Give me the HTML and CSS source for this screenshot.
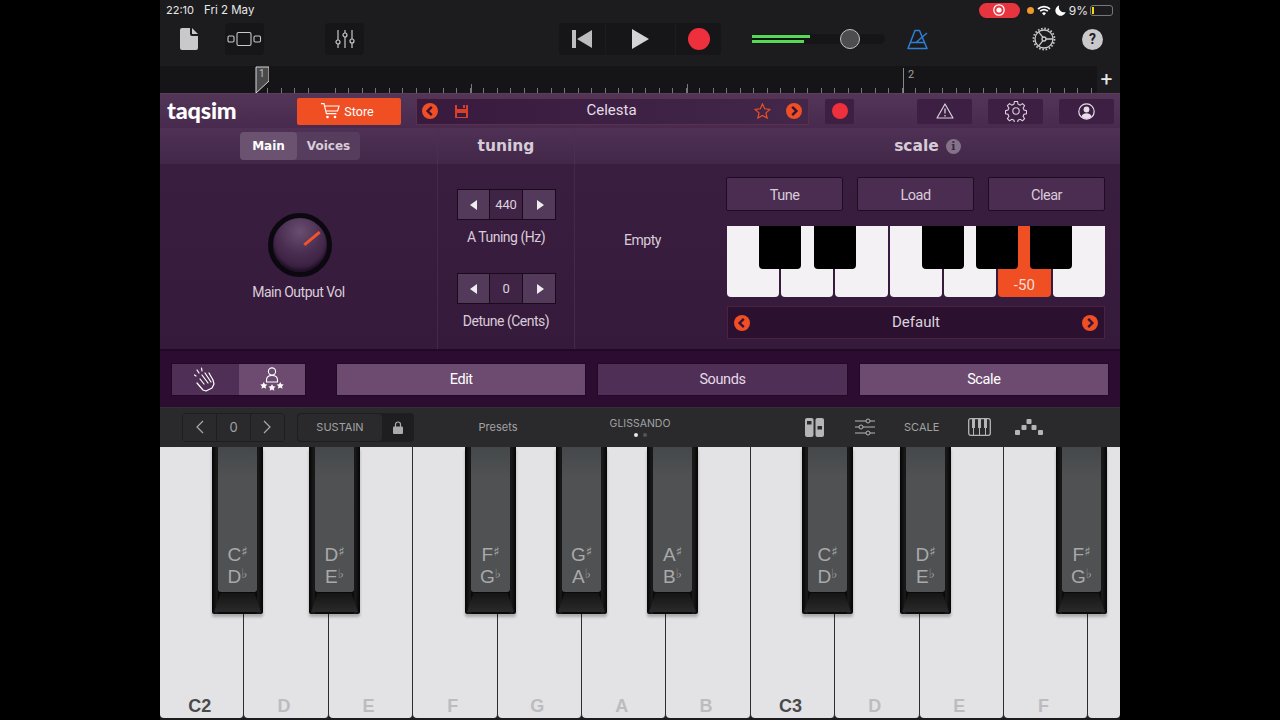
FILE: index.html
```html
<!DOCTYPE html>
<html lang="en">
<head>
<meta charset="utf-8">
<title>GarageBand taqsim</title>
<link rel="stylesheet" href="styles.css">
</head>
<body>
<div class="stage">
  <div class="status">
    <span class="time">22:10</span><span class="date">Fri 2 May</span>
    <span class="spacer"></span>
    <span class="rec-pill"><svg width="14" height="14" viewBox="0 0 14 14"><circle cx="7" cy="7" r="5.2" fill="none" stroke="#fff" stroke-width="1.3"/><circle cx="7" cy="7" r="2.6" fill="#fff"/></svg></span>
    <span class="dot-orange"></span>
    <svg class="st-wifi" width="14" height="11" viewBox="0 0 14 11"><path d="M1 4a9 9 0 0 1 12 0M3.2 6.2a6 6 0 0 1 7.6 0" fill="none" stroke="#fff" stroke-width="1.7"/><path d="M5 8.2a3 3 0 0 1 4 0L7 10.4z" fill="#fff"/></svg>
    <svg class="st-moon" width="11" height="11" viewBox="0 0 11 11"><path d="M4.2 .6A5.2 5.2 0 1 0 10.6 7 5 5 0 0 1 4.2.6z" fill="#fff"/></svg>
    <span class="pct">9%</span>
    <span class="battery"><span class="battery-fill"></span></span>
  </div>

  <div class="toolbar">
    <svg class="ic-doc" width="20" height="24" viewBox="0 0 20 24"><path d="M3 1h8v6a2 2 0 0 0 2 2h6v12a2 2 0 0 1-2 2H3a2 2 0 0 1-2-2V3a2 2 0 0 1 2-2zM13 1l6 6h-6z" fill="#c9c9cb"/></svg>
    <div class="tool-box box-views">
      <svg width="36" height="16" viewBox="0 0 36 16"><g fill="none" stroke="#c9c9cb" stroke-width="1.1"><rect x="1" y="5" width="6" height="6" rx="1.2"/><rect x="10" y="1.5" width="14" height="13" rx="1.5"/><rect x="27" y="5" width="6.5" height="6" rx="1.2"/></g></svg>
    </div>
    <div class="tool-box box-mixer">
      <svg width="20" height="20" viewBox="0 0 20 20"><g fill="none" stroke="#c9c9cb" stroke-width="1.2"><path d="M3 1v10M3 15v4M10 1v3M10 8v11M17 1v9M17 14v5"/><circle cx="3" cy="13" r="2"/><circle cx="10" cy="6" r="2"/><circle cx="17" cy="12" r="2"/></g></svg>
    </div>
    <div class="transport">
      <div class="tp-cell tp-prev"><svg width="22" height="18" viewBox="0 0 22 18"><path d="M1 0h4v18H1zM21 0v18L6 9z" fill="#bdbdbf"/></svg></div>
      <div class="tp-cell tp-play"><svg width="19" height="20" viewBox="0 0 19 20"><path d="M1 0l17 10L1 20z" fill="#d4d4d6"/></svg></div>
      <div class="tp-cell tp-rec"><span class="rec-big"></span></div>
    </div>
    <div class="level">
      <span class="meter-a"></span><span class="meter-b"></span>
      <span class="level-knob"></span>
    </div>
    <svg class="ic-metro" width="22" height="21" viewBox="0 0 22 21"><g fill="none" stroke="#2f7fd6" stroke-width="1.5" stroke-linejoin="round"><path d="M8 1.500h4.500L20 19.500H1z"/><path d="M4 13.500h13M9 13.500 20 4"/></g></svg>
    <svg class="ic-gear" width="24" height="24" viewBox="0 0 24 24"><g fill="none" stroke="#c9c9cb" stroke-width="1.300"><circle cx="12" cy="12" r="9"/><circle cx="12" cy="12" r="2"/><path d="M14 12h7M11 10.300 6.500 4.800M11 13.700l-4.500 5.500"/><circle cx="12" cy="12" r="10.500" stroke-dasharray="1.600 1.700" stroke-width="1.800"/></g></svg>
    <span class="ic-help">?</span>
  </div>

  <div class="ruler-row">
    <div class="ruler">
      <span class="tall tall-a"></span><span class="tall tall-b"></span><span class="bar-two"></span>
      <span class="bar-label">2</span>
      <svg class="playhead" width="14" height="27" viewBox="0 0 14 27"><path d="M1 1h13v14L1 27z" fill="#4a4a4c" stroke="#d8d8d8" stroke-width="1"/></svg>
      <span class="play-label">1</span>
    </div>
    <span class="plus">+</span>
  </div>

  <div class="plug-head">
    <div class="logo">taqs<span class="logo-i">i</span>m</div>
    <div class="store">
      <svg width="19" height="16" viewBox="0 0 19 16"><g fill="none" stroke="#fff" stroke-width="1.100"><path d="M0 .6h3l2.400 10h10M3.600 3h14.500l-1.500 5H5"/></g><circle cx="6.500" cy="14" r="1.300" fill="#fff"/><circle cx="14" cy="14" r="1.300" fill="#fff"/></svg>
      <span>Store</span>
    </div>
    <div class="preset">
      <span class="round-ar"><svg width="16" height="16" viewBox="0 0 16 16"><circle cx="8" cy="8" r="8" fill="#f04e23"/><path d="M9.800 3.800 5.600 8l4.200 4.200" fill="none" stroke="#35123a" stroke-width="2.400"/></svg></span>
      <svg class="ic-save" width="15" height="15" viewBox="0 0 15 15"><path d="M1 1h2v4h9V1h2v13H1zM9 1h2v3H9zM3 9h9v4H3z" fill="#d8402a" fill-rule="evenodd"/></svg>
      <span class="preset-name">Celesta</span>
      <svg class="ic-star" width="17" height="16" viewBox="0 0 17 16"><path d="M8.500 1l2.200 4.800 5.200.6-3.900 3.500 1.100 5.100-4.600-2.600L3.900 15l1.100-5.100L1.100 6.400l5.200-.6z" fill="none" stroke="#f04e23" stroke-width="1.200"/></svg>
      <span class="round-ar"><svg width="16" height="16" viewBox="0 0 16 16"><circle cx="8" cy="8" r="8" fill="#f04e23"/><path d="M6.200 3.800 10.400 8l-4.200 4.200" fill="none" stroke="#35123a" stroke-width="2.400"/></svg></span>
    </div>
    <div class="head-btn head-rec"><span class="rec-small"></span></div>
    <div class="head-btn hb-warn"><svg width="18" height="16" viewBox="0 0 18 16"><path d="M9 1l8 14H1z" fill="none" stroke="#ddd0dd" stroke-width="1.200" stroke-linejoin="round"/><path d="M9 5.500v5M9 12v1.500" stroke="#ddd0dd" stroke-width="1.300"/></svg></div>
    <div class="head-btn hb-gear"><svg width="22" height="22" viewBox="0 0 22 22"><g fill="none" stroke="#ddd0dd" stroke-width="1.100"><path d="M9.500 1.500h3l.6 2.700 2 .9 2.400-1.500 2.100 2.100-1.500 2.400.9 2 2.500.6v3l-2.500.6-.9 2 1.500 2.400-2.100 2.100-2.400-1.500-2 .9-.6 2.500h-3l-.6-2.500-2-.9-2.400 1.500-2.100-2.100 1.500-2.400-.9-2-2.500-.6v-3l2.500-.6.900-2-1.500-2.400 2.100-2.100 2.400 1.500 2-.9z"/><circle cx="11" cy="11" r="3.200"/></g></svg></div>
    <div class="head-btn hb-user"><svg width="17" height="17" viewBox="0 0 17 17"><circle cx="8.500" cy="8.500" r="7.700" fill="none" stroke="#e8dce8" stroke-width="1.200"/><circle cx="8.500" cy="6.500" r="2.900" fill="#e8dce8"/><path d="M3.300 13.600c1-2.600 3-3.400 5.200-3.400s4.200.8 5.200 3.400a7 7 0 0 1-10.400 0z" fill="#e8dce8"/></svg></div>
  </div>

  <div class="sec-heads">
    <div class="sec sec-a">
      <div class="tabs"><span class="tab tab-on">Main</span><span class="tab">Voices</span></div>
    </div>
    <div class="sec sec-b"><span class="sec-title">tuning</span></div>
    <div class="sec sec-c"><span class="sec-title">scale</span><span class="info">i</span></div>
  </div>

  <div class="panels">
    <div class="col col-a">
      <div class="knob"><span class="knob-needle"></span></div>
      <div class="lbl knob-lbl">Main Output Vol</div>
    </div>
    <div class="col col-b">
      <div class="stepper"><span class="st-cell"><i class="tri-l"></i></span><span class="st-cell st-val">440</span><span class="st-cell"><i class="tri-r"></i></span></div>
      <div class="lbl st-lbl">A Tuning (Hz)</div>
      <div class="stepper st-second"><span class="st-cell"><i class="tri-l"></i></span><span class="st-cell st-val">0</span><span class="st-cell"><i class="tri-r"></i></span></div>
      <div class="lbl st-lbl">Detune (Cents)</div>
    </div>
    <div class="col col-c">
      <div class="empty lbl">Empty</div>
      <div class="scale-panel">
        <div class="scale-btns">
          <span class="scale-btn">Tune</span><span class="scale-btn">Load</span><span class="scale-btn">Clear</span>
        </div>
        <div class="mini">
          <span class="mw"></span><span class="mw"></span><span class="mw"></span><span class="mw"></span><span class="mw"></span><span class="mw mw-on">-50</span><span class="mw"></span>
          <span class="mb mb1"></span><span class="mb mb2"></span><span class="mb mb3"></span><span class="mb mb4"></span><span class="mb mb5"></span><span class="mo"></span>
        </div>
        <div class="scale-name">
          <svg width="16" height="16" viewBox="0 0 16 16"><circle cx="8" cy="8" r="8" fill="#f04e23"/><path d="M9.800 3.800 5.600 8l4.200 4.200" fill="none" stroke="#35123a" stroke-width="2.400"/></svg>
          <span class="scale-title">Default</span>
          <svg width="16" height="16" viewBox="0 0 16 16"><circle cx="8" cy="8" r="8" fill="#f04e23"/><path d="M6.200 3.800 10.400 8l-4.200 4.200" fill="none" stroke="#35123a" stroke-width="2.400"/></svg>
        </div>
      </div>
    </div>
  </div>

  <div class="modes">
    <div class="toggle">
      <span class="tg tg-off"><svg width="22" height="25" viewBox="0 0 22 25"><g fill="none" stroke="#fff" stroke-width="1.200" stroke-linecap="round" stroke-linejoin="round"><path d="M6 12l4 5M8 8l6 8M11 6l6 9M15 6l4 7 1 4-2 4-6 3-3-1-6-7"/><path d="M5 6 3 3M8 4 7.500 1M2 9 .5 8"/></g></svg></span>
      <span class="tg tg-on"><svg width="24" height="25" viewBox="0 0 24 25"><g fill="none" stroke="#fff" stroke-width="1.100"><circle cx="12" cy="4.500" r="3.600"/><path d="M6.500 15v-2c0-3 2.500-4.500 5.500-4.500s5.500 1.500 5.500 4.500v2z"/></g><path d="M3.800 15l1.100 2.300 2.500.3-1.800 1.700.5 2.500-2.300-1.200-2.300 1.200.5-2.500L.2 17.600l2.500-.3zM12 17l1.100 2.300 2.500.3-1.800 1.700.5 2.500L12 22.600l-2.300 1.200.5-2.500-1.800-1.700 2.500-.3zM20.200 15l1.100 2.300 2.500.3-1.800 1.700.5 2.500-2.300-1.200-2.300 1.200.5-2.500-1.800-1.700 2.500-.3z" fill="#fff"/></svg></span>
    </div>
    <span class="mode-btn mode-on">Edit</span>
    <span class="mode-btn">Sounds</span>
    <span class="mode-btn mode-on">Scale</span>
  </div>

  <div class="kbar">
    <div class="oct">
      <span class="oct-cell"><svg width="9" height="14" viewBox="0 0 9 14"><path d="M8 1 2 7l6 6" fill="none" stroke="#aaa" stroke-width="1.200"/></svg></span>
      <span class="oct-cell oct-val">0</span>
      <span class="oct-cell"><svg width="9" height="14" viewBox="0 0 9 14"><path d="M1 1l6 6-6 6" fill="none" stroke="#aaa" stroke-width="1.200"/></svg></span>
    </div>
    <div class="sustain">
      <span class="sustain-label">SUSTAIN</span>
      <span class="sustain-lock"><svg width="10" height="13" viewBox="0 0 10 13"><path d="M2.500 6V3.500a2.500 2.500 0 0 1 5 0V6" fill="none" stroke="#aaa" stroke-width="1.200"/><rect y="5.500" width="10" height="7.500" rx="1" fill="#aaa"/></svg></span>
    </div>
    <span class="presets">Presets</span>
    <div class="gliss">
      <span>GLISSANDO</span>
      <span class="pager"><i class="pg-on"></i><i class="pg-off"></i></span>
    </div>
    <svg class="kb-i1" width="19" height="19" viewBox="0 0 19 19"><rect width="8.500" height="19" rx="2" fill="#b5b5b7"/><rect x="10.500" width="8.500" height="19" rx="2" fill="#b5b5b7"/><rect x="2" y="3" width="4.500" height="3.500" fill="#2a2a2c"/><rect x="12.500" y="8" width="4.500" height="3.500" fill="#2a2a2c"/></svg>
    <svg class="kb-i2" width="20" height="18" viewBox="0 0 20 18"><g fill="#2a2a2c" stroke="#b5b5b7" stroke-width="1"><path d="M0 3h20M0 9h20M0 15h20"/><circle cx="13" cy="3" r="2"/><circle cx="6" cy="9" r="2"/><circle cx="13" cy="15" r="2"/></g></svg>
    <span class="kb-scale">SCALE</span>
    <svg class="kb-i3" width="23" height="18" viewBox="0 0 23 18"><rect x=".7" y=".7" width="21.600" height="16.600" rx="2" fill="none" stroke="#b5b5b7" stroke-width="1.300"/><path d="M4 1h3v9H4zM10 1h3v9h-3zM16 1h3v9h-3z" fill="#b5b5b7"/><path d="M5.500 10v7M11.500 10v7M17.500 10v7" stroke="#b5b5b7"/></svg>
    <svg class="kb-i4" width="28" height="17" viewBox="0 0 28 17"><g fill="#b5b5b7"><rect x="0" y="11" width="5" height="5" rx="1"/><rect x="6.500" y="6" width="5" height="5" rx="1"/><rect x="11.500" y="0" width="5" height="5" rx="1"/><rect x="16.500" y="6" width="5" height="5" rx="1"/><rect x="23" y="11" width="5" height="5" rx="1"/></g></svg>
  </div>

  <div class="keys">
    <div class="white"><span class="wl wl-c">C2</span></div>
    <div class="white"><span class="wl">D</span></div>
    <div class="white"><span class="wl">E</span></div>
    <div class="white"><span class="wl">F</span></div>
    <div class="white"><span class="wl">G</span></div>
    <div class="white"><span class="wl">A</span></div>
    <div class="white"><span class="wl">B</span></div>
    <div class="white"><span class="wl wl-c">C3</span></div>
    <div class="white"><span class="wl">D</span></div>
    <div class="white"><span class="wl">E</span></div>
    <div class="white"><span class="wl">F</span></div>
    <div class="white white-cut"></div>

    <div class="black b1"><div class="cap"><span>C<sup>♯</sup></span><span>D<sup>♭</sup></span></div><div class="bevel"></div></div>
    <div class="black b2"><div class="cap"><span>D<sup>♯</sup></span><span>E<sup>♭</sup></span></div><div class="bevel"></div></div>
    <div class="black b3"><div class="cap"><span>F<sup>♯</sup></span><span>G<sup>♭</sup></span></div><div class="bevel"></div></div>
    <div class="black b4"><div class="cap"><span>G<sup>♯</sup></span><span>A<sup>♭</sup></span></div><div class="bevel"></div></div>
    <div class="black b5"><div class="cap"><span>A<sup>♯</sup></span><span>B<sup>♭</sup></span></div><div class="bevel"></div></div>
    <div class="black b6"><div class="cap"><span>C<sup>♯</sup></span><span>D<sup>♭</sup></span></div><div class="bevel"></div></div>
    <div class="black b7"><div class="cap"><span>D<sup>♯</sup></span><span>E<sup>♭</sup></span></div><div class="bevel"></div></div>
    <div class="black b8"><div class="cap"><span>F<sup>♯</sup></span><span>G<sup>♭</sup></span></div><div class="bevel"></div></div>
  </div>
</div>
</body>
</html>
```

FILE: styles.css
```css
* { box-sizing: border-box; }
html, body { margin: 0; height: 720px; background: #000; overflow: hidden; }
body { font-family: Roboto, "Liberation Sans", sans-serif; color: #e4d8e4; }
.stage { width: 960px; height: 720px; margin: 0 auto; background: #1c1c1e; display: flex; flex-direction: column; }

/* status bar */
.status { height: 20px; display: flex; align-items: center; padding: 0 7px 0 6px; font-size: 11px; color: #e8e8e8; font-family: Inter, Roboto, sans-serif; }
.date { margin-left: 10px; font-size: 11.500px; }
.spacer { flex: 1; }
.rec-pill { width: 41px; height: 15px; background: #e8343f; border-radius: 8px; display: flex; align-items: center; justify-content: center; }
.dot-orange { width: 7px; height: 7px; border-radius: 50%; background: #f0982a; margin-left: 7px; }
.st-wifi { margin-left: 3px; }
.st-moon { margin-left: 4px; }
.pct { margin-left: 3px; font-size: 12px; }
.battery { width: 23px; height: 11px; border: 1px solid #777; border-radius: 3px; margin-left: 2px; padding: 1px; display: flex; }
.battery-fill { width: 2px; background: #f5d90a; }

/* toolbar */
.toolbar { height: 46px; display: flex; align-items: center; padding: 0 0 8px 19px; }
.tool-box { height: 32px; background: #161618; border-radius: 4px; display: flex; align-items: center; justify-content: center; width: 39px; }
.box-views { margin-left: 26px; }
.box-mixer { margin-left: 61px; }
.transport { display: flex; margin-left: 195px; height: 32px; gap: 1px; }
.tp-cell { background: #161618; display: flex; align-items: center; justify-content: center; height: 32px; }
.tp-prev { width: 46px; border-radius: 4px 0 0 4px; }
.tp-play { width: 69px; }
.tp-rec { width: 45px; border-radius: 0 4px 4px 0; }
.rec-big { width: 22px; height: 22px; border-radius: 50%; background: #ee2f3c; }
.level { position: relative; width: 133px; height: 10px; margin-left: 31px; border-radius: 5px; background: #151517; }
.meter-a { position: absolute; left: 0; top: 1px; width: 58px; height: 3px; background: #55d956; }
.meter-b { position: absolute; left: 0; top: 6px; width: 52px; height: 3px; background: #55d956; }
.level-knob { position: absolute; left: 88px; top: -5px; width: 20px; height: 20px; border-radius: 50%; background: #4d4d4f; border: 1.500px solid #c0c0c0; }
.ic-metro { margin-left: 22px; }
.ic-gear { margin-left: 103px; }
.ic-help { margin-left: 26px; width: 21px; height: 21px; border-radius: 50%; background: #c9c9cb; color: #1c1c1e; font-size: 14px; font-weight: 700; display: flex; align-items: center; justify-content: center; }

/* ruler */
.ruler-row { height: 27px; display: flex; }
.ruler { position: relative; width: 937px; height: 27px; background:
  repeating-linear-gradient(90deg, transparent 0 12.500px, #77777a 12.500px 13.500px) 95px 100% / 100% 5px no-repeat, #151517; }
.tall { position: absolute; top: 18px; width: 1px; height: 9px; background: #77777a; }
.tall-a { left: 311px; }
.tall-b { left: 527px; }
.bar-two { position: absolute; left: 743px; top: 2px; width: 1px; height: 25px; background: #88888a; }
.bar-label { position: absolute; left: 748px; top: 2px; font-size: 11px; color: #a0a0a2; }
.playhead { position: absolute; left: 95px; top: 0; }
.play-label { position: absolute; left: 99px; top: 2px; font-size: 10px; color: #bbb; }
.plus { flex: 1; color: #e8e8e8; font-size: 21px; font-weight: 400; line-height: 27px; text-align: center; padding-right: 4px; }

/* plugin head */
.plug-head { height: 35px; display: flex; align-items: center; background: linear-gradient(#533558, #482a4e); border-top: 1px solid #5b3d60; }
.logo { width: 137px; padding: 0 0 3px 7px; font-family: Lato, sans-serif; font-weight: 900; font-size: 23.500px; color: #fff; letter-spacing: -0.2px; line-height: 30px; }
.logo-i { color: #fff; }
.store { width: 104px; height: 27px; background: #f04e23; border-radius: 2px; display: flex; align-items: center; justify-content: center; gap: 4px; padding-right: 3px; color: #fff; font-size: 12.500px; }
.preset { width: 393px; height: 27px; margin-left: 15px; display: flex; align-items: center; padding: 0 6px 0 5px; background: linear-gradient(90deg, #371a3d, #43274a); border: 1px solid #5d2f4a; }
.ic-save { margin-left: 16px; }
.preset-name { flex: 1; text-align: center; font-size: 15px; color: #e6dce6; padding-bottom: 2px; }
.ic-star { margin-right: 15px; }
.round-ar { display: flex; }
.head-btn { height: 25px; background: #3c1f43; border-radius: 2px; display: flex; align-items: center; justify-content: center; }
.head-rec { width: 29px; margin-left: 16px; }
.rec-small { width: 16px; height: 16px; border-radius: 50%; background: #ee2f3c; }
.hb-warn { width: 55px; margin-left: 63px; }
.hb-gear { width: 55px; margin-left: 16px; }
.hb-user { width: 55px; margin-left: 16px; }

/* section heads */
.sec-heads { height: 36px; display: flex; background: linear-gradient(#4e3154, #432749); }
.sec { display: flex; align-items: center; justify-content: center; border-right: 1px solid #4a2f50; }
.sec-a { width: 278px; justify-content: flex-start; padding-left: 80px; }
.tabs { display: flex; width: 120px; height: 28px; background: #573d5d; border-radius: 4px; }
.tab { flex: 1; display: flex; align-items: center; justify-content: center; font-family: "DejaVu Sans", sans-serif; font-weight: 700; font-size: 12px; color: #d8cdd9; }
.tab-on { flex: 0 0 57px; background: #6b5270; border-radius: 4px; color: #fff; }
.sec-b { width: 137px; }
.sec-c { flex: 1; border-right: 0; gap: 7px; padding-left: 160px; }
.sec-title { font-family: "DejaVu Sans", sans-serif; font-weight: 700; font-size: 15.500px; color: #d6ccd7; }
.info { width: 15px; height: 15px; border-radius: 50%; background: #847388; color: #402645; font-family: "DejaVu Serif", serif; font-weight: 700; font-size: 11px; display: flex; align-items: center; justify-content: center; }

/* main panels */
.panels { height: 187px; display: flex; background: linear-gradient(#3a1e40, #361a3c); border-bottom: 2px solid #210a25; }
.col-a { width: 278px; display: flex; flex-direction: column; align-items: center; padding-top: 49px; border-right: 1px solid #44294a; }
.knob { position: relative; width: 64px; height: 64px; border-radius: 50%; border: 5px solid #0c0810; margin-left: 2px; background: radial-gradient(circle at 50% 25%, #6a4e70 0, #4a2e51 45%, #2c1432 100%); box-shadow: inset 0 -3px 3px #22102a; }
.knob-needle { position: absolute; left: 29px; top: 19px; width: 20px; height: 3px; background: #f2532a; transform: rotate(-40deg); }
.lbl { font-size: 14px; letter-spacing: -0.5px; color: #d9ccd9; }
.knob-lbl { margin-top: 7px; }
.col-b { width: 137px; display: flex; flex-direction: column; align-items: center; padding-top: 25px; border-right: 1px solid #44294a; }
.stepper { display: flex; width: 99px; height: 31px; background: #1a0a1e; padding: 1px; gap: 1px; }
.st-second { margin-top: 28px; }
.st-cell { flex: 1; background: #533a5a; display: flex; align-items: center; justify-content: center; font-size: 13px; color: #ddd2dd; }
.st-val { background: #3f2446; letter-spacing: -0.2px; }
.tri-l, .tri-r { width: 0; height: 0; border-top: 5px solid transparent; border-bottom: 5px solid transparent; }
.tri-l { border-right: 7px solid #eee; }
.tri-r { border-left: 7px solid #eee; margin-left: 3px; }
.st-lbl { margin-top: 9px; height: 16px; line-height: 16px; }
.col-c { flex: 1; display: flex; }
.empty { width: 135px; text-align: center; padding-top: 68px; }
.scale-panel { width: 378px; margin-left: 17px; padding-top: 13px; }
.scale-btns { display: flex; justify-content: space-between; margin-left: -1px; }
.scale-btn { width: 117px; height: 34px; padding-top: 2px; background: #4a2d51; border: 1px solid #1f0c24; border-radius: 2px; display: flex; align-items: center; justify-content: center; font-size: 14.500px; letter-spacing: -0.5px; color: #d9ccd9; }
.mini { position: relative; height: 71px; margin-top: 15px; display: flex; gap: 2px; }
.mw { flex: 1; background: #f3f1f4; border-radius: 0 0 4px 4px; display: flex; align-items: flex-end; justify-content: center; font-size: 15px; color: #f6ddd6; padding-bottom: 3px; }
.mw-on { background: #f04e23; flex: 0 0 53px; }
.mb { position: absolute; top: 0; height: 43px; width: 42px; background: #000; border-radius: 0 0 4px 4px; }
.mb1 { left: 32px; }
.mb2 { left: 87px; }
.mb3 { left: 195px; }
.mb4 { left: 249px; }
.mb5 { left: 303px; }
.mo { position: absolute; top: 0; left: 291px; width: 12px; height: 45px; background: #f04e23; }
.scale-name { height: 33px; margin-top: 9px; display: flex; align-items: center; justify-content: space-between; padding: 0 6px; background: #2b1030; border: 1px solid #4c2240; font-size: 15px; color: #ddd2dd; }
.scale-title { padding-bottom: 2px; }

/* modes */
.modes { height: 56px; background: #2c0d31; display: flex; align-items: center; padding: 0 11px; gap: 11px; }
.toggle { display: flex; width: 135px; height: 33px; margin-right: 19px; background: #4f2f55; border: 1px solid #210a25; }
.tg { flex: 1; display: flex; align-items: center; justify-content: center; }
.tg-on { background: #6d4b70; }
.mode-btn { flex: 1; height: 33px; background: #4f2f55; border: 1px solid #210a25; display: flex; align-items: center; justify-content: center; font-size: 14.500px; letter-spacing: -0.4px; color: #e6dae6; }
.mode-on { background: #6d4b70; color: #fff; }

/* keyboard bar */
.kbar { height: 40px; background: #2a2a2c; display: flex; align-items: center; padding-bottom: 1px; font-family: Inter, Roboto, sans-serif; font-size: 11px; color: #a2a2a4; border-top: 1px solid #323234; }
.oct { display: flex; width: 103px; height: 29px; margin-left: 22px; gap: 1px; background: #1e1e20; border-radius: 4px; padding: 1px; }
.oct-cell { flex: 1; background: #2a2a2c; display: flex; align-items: center; justify-content: center; font-size: 13px; }
.sustain { display: flex; width: 117px; height: 29px; margin-left: 12px; background: #1e1e20; border-radius: 4px; }
.sustain-label { width: 84px; background: #2a2a2c; border-radius: 4px; margin: 1px 0 1px 1px; display: flex; align-items: center; justify-content: center; }
.sustain-lock { flex: 1; display: flex; align-items: center; justify-content: center; }
.presets { width: 60px; margin-left: 54px; text-align: center; }
.gliss { width: 80px; margin-left: 72px; display: flex; flex-direction: column; align-items: center; gap: 3px; font-size: 10.500px; }
.pager { display: flex; gap: 5px; }
.pager i { width: 4px; height: 4px; border-radius: 50%; }
.pg-on { background: #e8e8e8; }
.pg-off { background: #555557; }
.kb-i1 { margin-left: 125px; }
.kb-i2 { margin-left: 31px; }
.kb-scale { margin-left: 29px; width: 36px; }
.kb-i3 { margin-left: 28px; }
.kb-i4 { margin-left: 24px; }

/* piano */
.keys { position: relative; height: 271px; display: flex; margin-bottom: 2px; overflow: hidden; background: #222; }
.white { flex: 0 0 84.400px; background: #e3e3e5; border-right: 1.500px solid #2e2e30; border-radius: 0 0 4px 4px; display: flex; align-items: flex-end; justify-content: center; padding: 0 4px 2px 0; }
.white-cut { flex: 1; border-right: 0; }
.wl { font-family: "Liberation Sans", sans-serif; font-size: 18px; font-weight: 700; color: #bcbcbe; line-height: 20px; }
.wl-c { color: #49494b; }
.black { position: absolute; top: 0; width: 51px; height: 167px; background: linear-gradient(90deg, #050505, #1b1b1b 10%, #0a0a0a 13%, #0a0a0a 87%, #1b1b1b 90%, #050505); border-radius: 0 0 2px 2px; box-shadow: 0 3px 3px rgba(0,0,0,.25); padding: 0 6px; }
.b1 { left: 52px; }
.b2 { left: 149px; }
.b3 { left: 305px; }
.b4 { left: 396px; }
.b5 { left: 487px; }
.b6 { left: 642px; }
.b7 { left: 740px; }
.b8 { left: 896px; }
.cap { height: 145px; background: linear-gradient(#45484a, #4f5153 20%); border-radius: 0 0 3px 3px; display: flex; flex-direction: column; justify-content: flex-end; align-items: center; padding-bottom: 4px; font-family: "Liberation Sans", sans-serif; font-size: 19px; line-height: 22px; color: #a9a9ab; }
.cap sup { font-size: 13px; line-height: 0; vertical-align: 5px; font-family: "DejaVu Sans", sans-serif; }
.bevel { position: absolute; left: 2px; right: 2px; top: 146px; height: 19px; background: linear-gradient(#151515, #2a2a2a); clip-path: polygon(14% 0, 86% 0, 100% 100%, 0 100%); }
```
